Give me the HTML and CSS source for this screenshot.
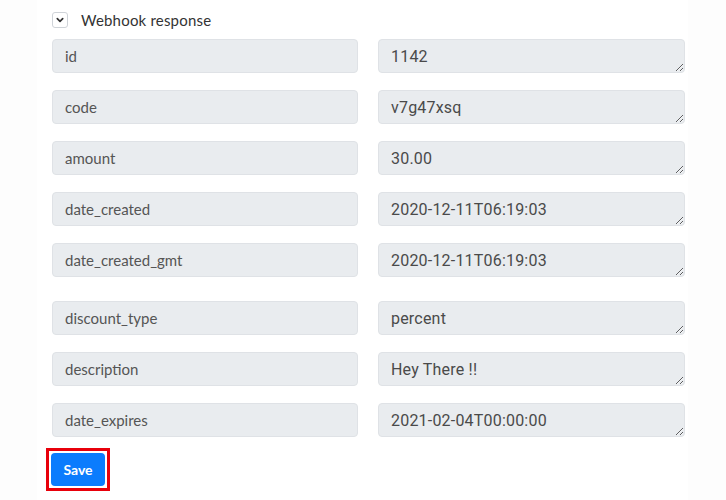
FILE: index.html
```html
<!DOCTYPE html>
<html lang="en">
<head>
    <meta charset="UTF-8">
    <meta name="viewport" content="width=device-width, initial-scale=1.0">
    <title>Webhook response</title>
    <link rel="stylesheet" href="styles.css">
</head>
<body>
    <div class="painel">
        <div class="cabecalho">
            <span class="caixa-toggle">
                <svg width="10" height="10" viewBox="0 0 10 10"><path d="M2.3 3.6 L5 6.3 L7.7 3.6" fill="none" stroke="#333" stroke-width="1.7" stroke-linecap="round" stroke-linejoin="round"/></svg>
            </span>
            <span class="titulo">Webhook response</span>
        </div>

        <div class="linhas">
            <div class="linha">
                <div class="rotulo">id</div>
                <textarea class="valor" readonly>1142</textarea>
            </div>
            <div class="linha">
                <div class="rotulo">code</div>
                <textarea class="valor" readonly>v7g47xsq</textarea>
            </div>
            <div class="linha">
                <div class="rotulo">amount</div>
                <textarea class="valor" readonly>30.00</textarea>
            </div>
            <div class="linha">
                <div class="rotulo">date_created</div>
                <textarea class="valor" readonly>2020-12-11T06:19:03</textarea>
            </div>
            <div class="linha">
                <div class="rotulo">date_created_gmt</div>
                <textarea class="valor" readonly>2020-12-11T06:19:03</textarea>
            </div>
            <div class="linha separada">
                <div class="rotulo">discount_type</div>
                <textarea class="valor" readonly>percent</textarea>
            </div>
            <div class="linha">
                <div class="rotulo">description</div>
                <textarea class="valor" readonly>Hey There !!</textarea>
            </div>
            <div class="linha">
                <div class="rotulo">date_expires</div>
                <textarea class="valor" readonly>2021-02-04T00:00:00</textarea>
            </div>
        </div>

        <span class="destaque">
            <button class="botao-salvar">Save</button>
        </span>
    </div>
</body>
</html>
```

FILE: styles.css
```css
* {
    margin: 0;
    padding: 0;
    box-sizing: border-box;
}
body {
    background-color: #fdfdfd;
    font-family: 'Lato', 'Open Sans', sans-serif;
    color: #333;
    height: 500px;
    overflow: hidden;
}
.painel {
    background-color: #ffffff;
    width: 651px;
    margin-left: 37px;
    height: 500px;
    padding: 12px 0 0 15px;
}
.cabecalho {
    display: flex;
    align-items: center;
    gap: 13px;
    height: 16px;
}
.caixa-toggle {
    width: 16px;
    height: 16px;
    border: 1px solid #cfd3d8;
    border-radius: 3px;
    background: #fff;
    display: flex;
    align-items: center;
    justify-content: center;
}
.titulo {
    font-size: 15px;
    color: #333;
    letter-spacing: 0.2px;
}
.linhas {
    margin-top: 11px;
    display: flex;
    flex-direction: column;
    gap: 17px;
}
.linha {
    display: grid;
    grid-template-columns: 306px 307px;
    column-gap: 20px;
}
.linha.separada {
    margin-top: 7px;
}
.rotulo,
.valor {
    height: 34px;
    background-color: #e9ecef;
    border: 1px solid #dfe2e6;
    border-radius: 4px;
    font-size: 15px;
    line-height: 20px;
}
.rotulo {
    padding: 6px 12px;
    color: #555;
}
.valor {
    padding: 7px 12px 5px;
    color: #4a4a4a;
    font-family: 'Roboto', 'Liberation Sans', sans-serif;
    font-size: 16px;
    letter-spacing: 0.2px;
    resize: vertical;
    overflow: hidden;
    outline: none;
}
.destaque {
    display: inline-block;
    margin-top: 11px;
    margin-left: -6px;
    border: 3px solid #e8000b;
    padding: 2px;
    line-height: 0;
}
.botao-salvar {
    width: 54px;
    height: 33px;
    border: none;
    border-radius: 4px;
    background-color: #0b7cfd;
    color: #fff;
    font-family: 'Lato', sans-serif;
    font-weight: 700;
    font-size: 14px;
    line-height: 33px;
    cursor: pointer;
}
```
